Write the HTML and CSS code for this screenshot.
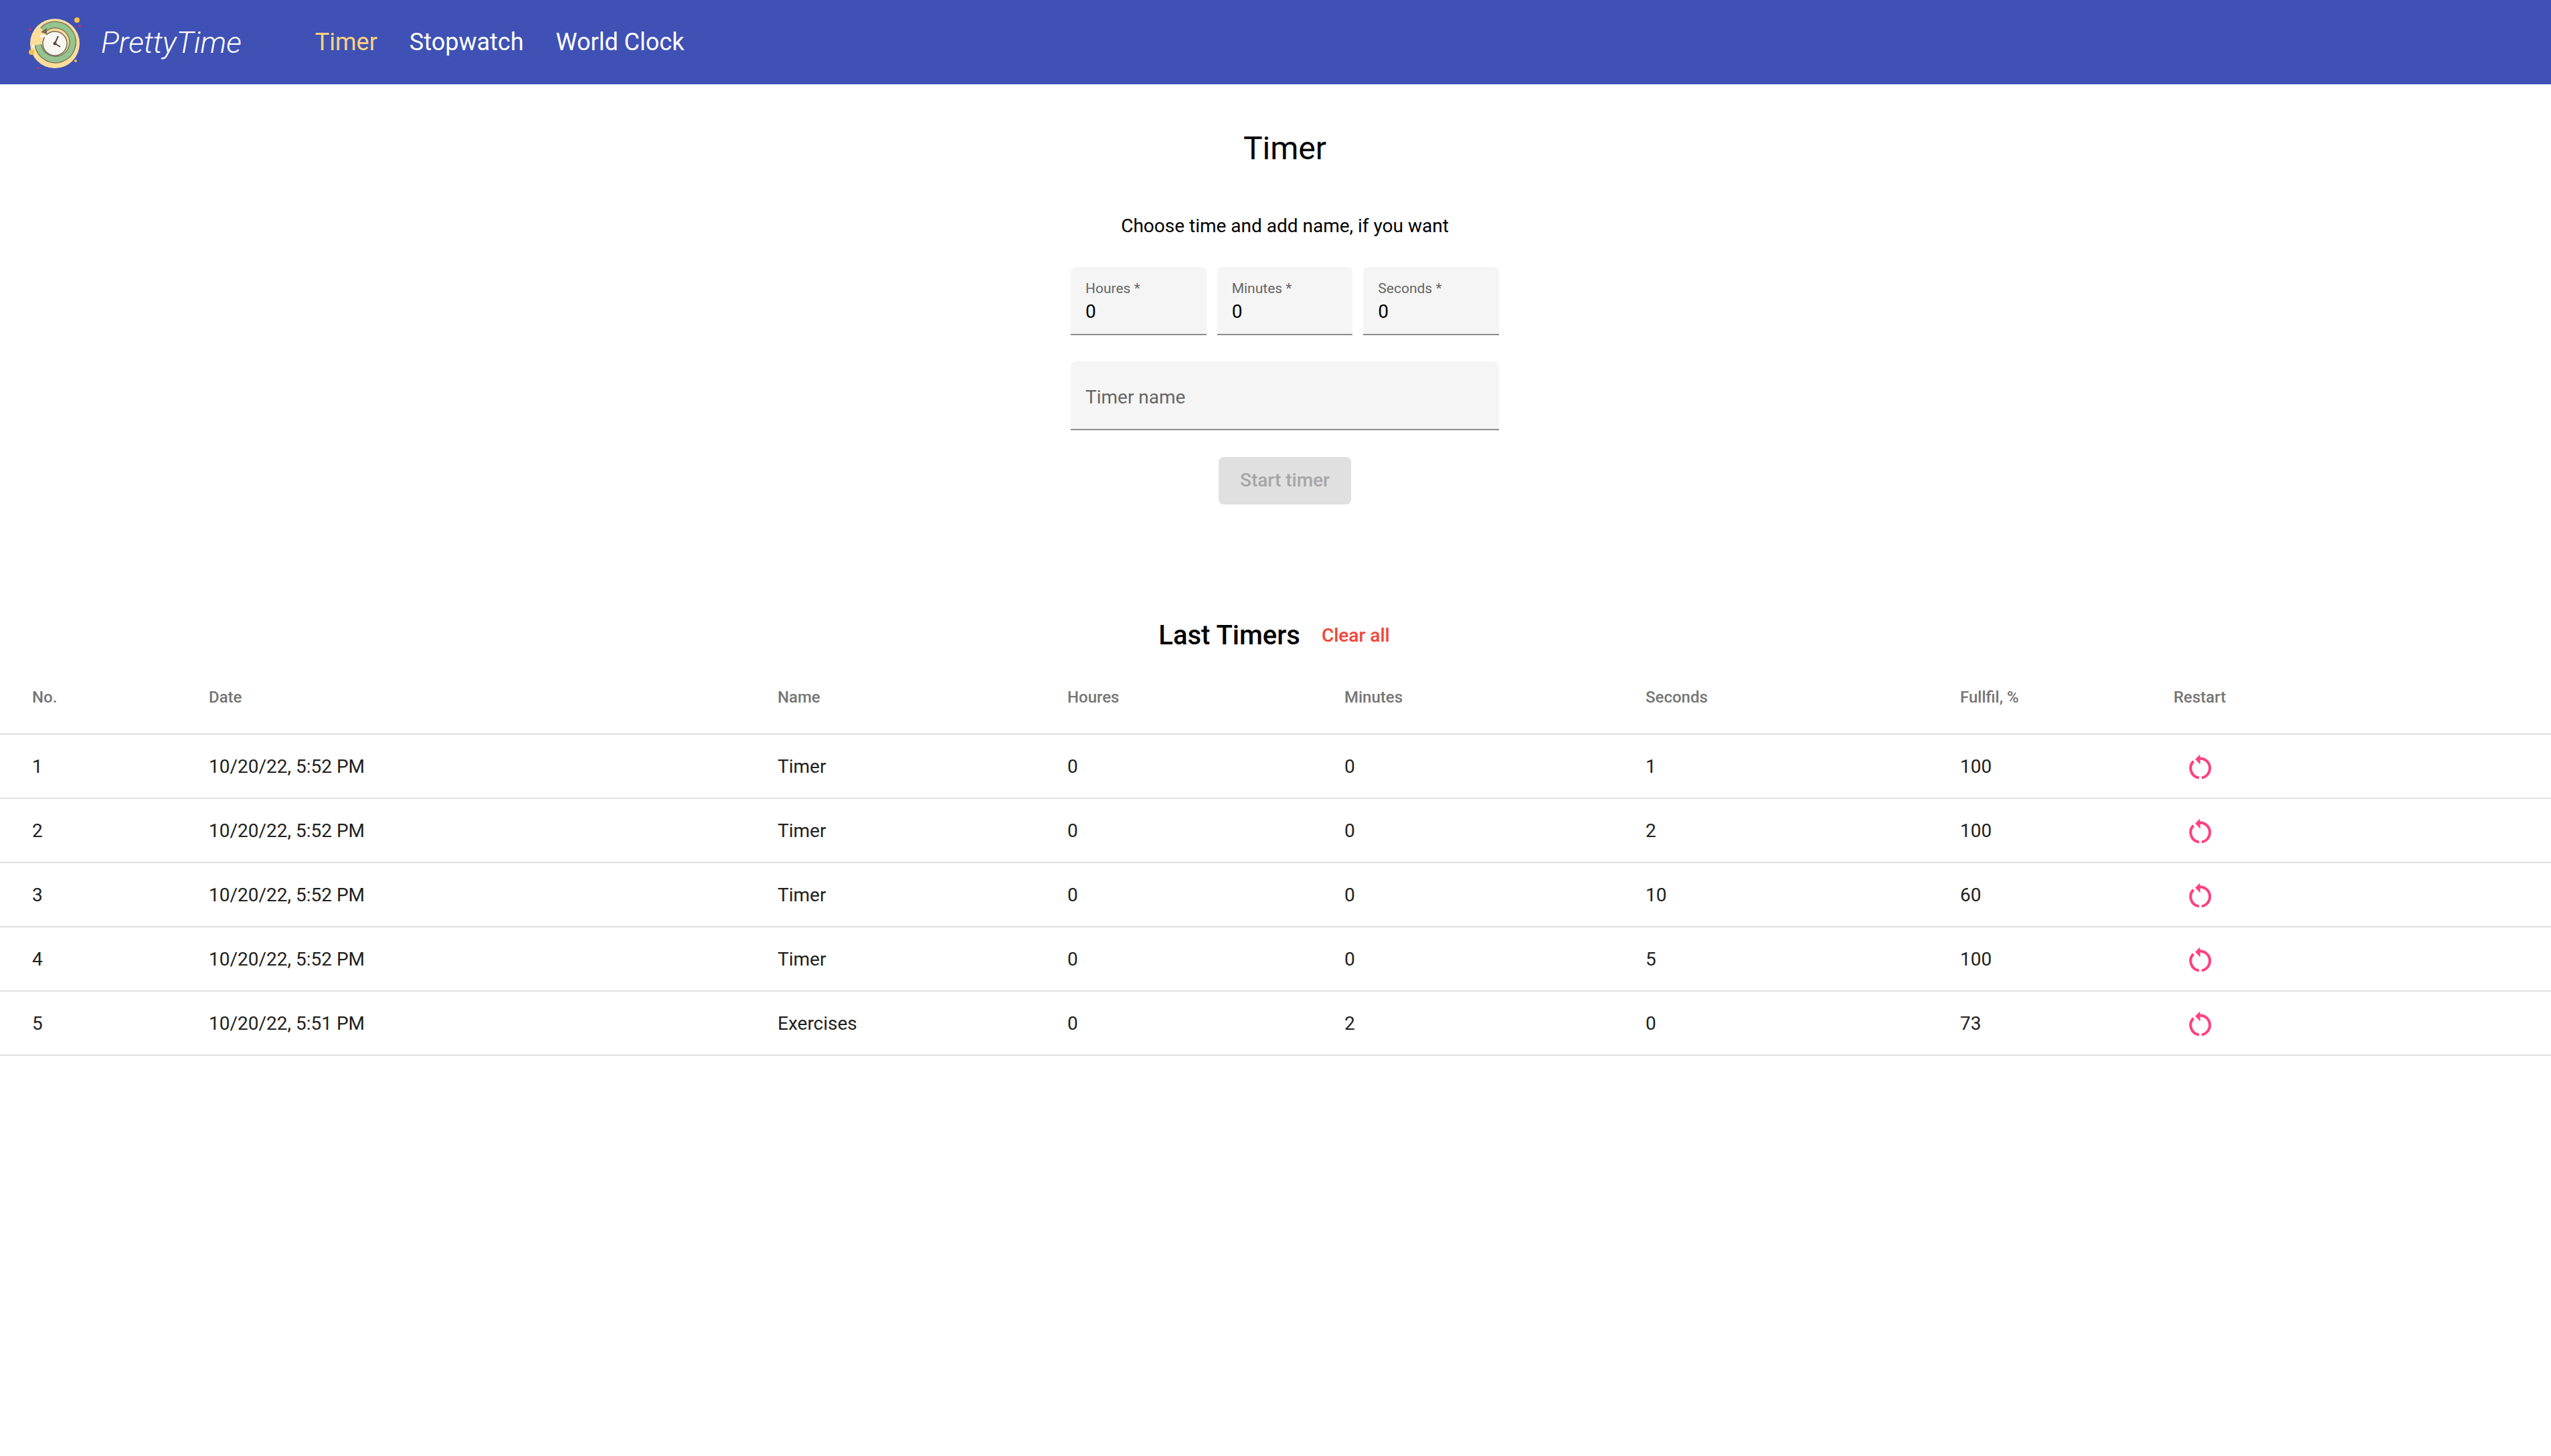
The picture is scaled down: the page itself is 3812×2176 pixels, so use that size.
FILE: index.html
```html
<!DOCTYPE html>
<html lang="en">
<head>
  <meta charset="UTF-8">
  <title>PrettyTime</title>
  <link rel="stylesheet" href="styles.css">
</head>
<body>
  <!-- top bar -->
  <header class="toolbar">
    <svg class="logo" viewBox="0 0 120 120" width="120" height="120" aria-hidden="true">
      <circle cx="62" cy="62" r="37" fill="#fedd9b"/>
      <path d="M44 42A26 26 0 1 1 37 64" fill="none" stroke="#7d7a5c" stroke-width="11"/>
      <path d="M44 42A26 26 0 1 1 37 64" fill="none" stroke="#95c48f" stroke-width="8"/>
      <circle cx="62" cy="62" r="18" fill="#f8f6f1" stroke="#6f6a5a" stroke-width="1.5"/>
      <path d="M62 62l5-11M62 62l8 5" stroke="#5a4a44" stroke-width="2" fill="none"/>
      <circle cx="62" cy="62" r="2.5" fill="#5a4a44"/>
      <path d="M41 45l9-6v9z" fill="#6f6a5a"/>
      <path d="M40 51h13" stroke="#fff" stroke-width="3"/>
      <circle cx="95" cy="27" r="4" fill="#f5c142"/>
      <circle cx="27" cy="75" r="4" fill="#f5c142"/>
      <circle cx="30" cy="66" r="2" fill="#fff"/>
      <circle cx="93" cy="88" r="2" fill="#f5c142"/>
      <circle cx="99" cy="36" r="2" fill="#c2325f"/>
      <circle cx="25" cy="41" r="2" fill="#c2325f"/>
      <circle cx="37" cy="99" r="2" fill="#c2325f"/>
    </svg>
    <span class="brand">PrettyTime</span>
    <nav class="nav">
      <a class="nav-link active" href="#">Timer</a>
      <a class="nav-link" href="#">Stopwatch</a>
      <a class="nav-link" href="#">World Clock</a>
    </nav>
  </header>

  <!-- timer form -->
  <section class="timer-panel">
    <h1 class="title">Timer</h1>
    <p class="subtitle">Choose time and add name, if you want</p>
    <div class="time-fields">
      <div class="field">
        <span class="field-label">Houres *</span>
        <span class="field-value">0</span>
      </div>
      <div class="field">
        <span class="field-label">Minutes *</span>
        <span class="field-value">0</span>
      </div>
      <div class="field">
        <span class="field-label">Seconds *</span>
        <span class="field-value">0</span>
      </div>
    </div>
    <div class="field field-name">
      <span class="field-placeholder">Timer name</span>
    </div>
    <button class="start-btn" disabled>Start timer</button>
  </section>

  <!-- history -->
  <section class="history">
    <div class="history-head">
      <h2 class="history-title">Last Timers</h2>
      <a class="clear-link" href="#">Clear all</a>
    </div>
    <table class="history-table">
      <colgroup>
        <col class="col-no"><col class="col-date"><col class="col-name"><col class="col-hours">
        <col class="col-minutes"><col class="col-seconds"><col class="col-fullfil"><col>
      </colgroup>
      <thead>
        <tr><th>No.</th><th>Date</th><th>Name</th><th>Houres</th><th>Minutes</th><th>Seconds</th><th>Fullfil, %</th><th>Restart</th></tr>
      </thead>
      <tbody>
        <tr>
          <td>1</td><td>10/20/22, 5:52 PM</td><td>Timer</td><td>0</td><td>0</td><td>1</td><td>100</td>
          <td><svg class="restart" viewBox="0 0 48 48" width="48" height="48"><use href="#restart-icon"/></svg></td>
        </tr>
        <tr>
          <td>2</td><td>10/20/22, 5:52 PM</td><td>Timer</td><td>0</td><td>0</td><td>2</td><td>100</td>
          <td><svg class="restart" viewBox="0 0 48 48" width="48" height="48"><use href="#restart-icon"/></svg></td>
        </tr>
        <tr>
          <td>3</td><td>10/20/22, 5:52 PM</td><td>Timer</td><td>0</td><td>0</td><td>10</td><td>60</td>
          <td><svg class="restart" viewBox="0 0 48 48" width="48" height="48"><use href="#restart-icon"/></svg></td>
        </tr>
        <tr>
          <td>4</td><td>10/20/22, 5:52 PM</td><td>Timer</td><td>0</td><td>0</td><td>5</td><td>100</td>
          <td><svg class="restart" viewBox="0 0 48 48" width="48" height="48"><use href="#restart-icon"/></svg></td>
        </tr>
        <tr>
          <td>5</td><td>10/20/22, 5:51 PM</td><td>Exercises</td><td>0</td><td>2</td><td>0</td><td>73</td>
          <td><svg class="restart" viewBox="0 0 48 48" width="48" height="48"><use href="#restart-icon"/></svg></td>
        </tr>
      </tbody>
    </table>
  </section>

  <svg class="icon-defs" width="0" height="0" aria-hidden="true">
    <defs>
      <g id="restart-icon">
        <path d="M23 9.6A14.5 14.5 0 0 1 26 38.4M22 38.4A14.5 14.5 0 0 1 13.8 13.7" fill="none" stroke="#ff4081" stroke-width="4"/>
        <path d="M16.3 10.7L23.3 3.4L24 18.4z" fill="#ff4081"/>
      </g>
    </defs>
  </svg>
</body>
</html>
```

FILE: styles.css
```css
html, body {
  margin: 0;
  padding: 0;
  background: #ffffff;
  color: #000000;
  font-family: Roboto, "Liberation Sans", sans-serif;
}

/* top bar */
.toolbar {
  display: flex;
  align-items: center;
  height: 126px;
  background: #3f51b5;
  color: #ffffff;
}
.logo {
  flex: none;
  margin-left: 20px;
}
.brand {
  margin-left: 11px;
  font-size: 45px;
  font-weight: 300;
  font-style: italic;
}
.nav {
  display: flex;
  gap: 48px;
  margin-left: 110px;
}
.nav-link {
  color: #ffffff;
  font-size: 36px;
  font-weight: 400;
  text-decoration: none;
}
.nav-link.active {
  color: #ffd180;
}

/* timer form */
.timer-panel {
  display: flex;
  flex-direction: column;
  align-items: center;
  padding-left: 28px;
}
.title {
  margin: 64px 0 0;
  font-size: 48px;
  font-weight: 400;
  line-height: 64px;
}
.subtitle {
  margin: 64px 0 0;
  font-size: 28px;
  font-weight: 400;
  line-height: 40px;
}
.time-fields {
  display: flex;
  gap: 16px;
  width: 640px;
  margin-top: 41px;
}
.field {
  box-sizing: border-box;
  display: flex;
  flex-direction: column;
  flex: 1;
  height: 102px;
  padding: 18px 22px 0;
  background: #f5f5f5;
  border-bottom: 2px solid #8c8c8c;
  border-radius: 8px 8px 0 0;
}
.field-label {
  font-size: 21px;
  line-height: 28px;
  color: #666666;
}
.field-value {
  margin-top: 3px;
  font-size: 28px;
  line-height: 36px;
}
.field-name {
  flex: none;
  justify-content: center;
  width: 640px;
  height: 103px;
  margin-top: 39px;
  padding-top: 5px;
}
.field-placeholder {
  font-size: 28px;
  color: #666666;
}
.start-btn {
  width: 198px;
  height: 71px;
  margin-top: 40px;
  padding: 0 0 3px;
  border: none;
  border-radius: 8px;
  background: #e0e0e0;
  color: #a6a6a6;
  font-family: inherit;
  font-size: 28px;
  font-weight: 500;
}

/* history */
.history-head {
  display: flex;
  align-items: center;
  justify-content: center;
  gap: 32px;
  height: 64px;
  margin-top: 163px;
  padding-right: 4px;
}
.history-title {
  margin: 0;
  font-size: 40px;
  font-weight: 500;
}
.clear-link {
  color: #f44336;
  font-size: 28px;
  font-weight: 500;
  text-decoration: none;
}
.history-table {
  width: 100%;
  margin-top: 4px;
  border-collapse: collapse;
  table-layout: fixed;
}
.col-no { width: 312px; }
.col-date { width: 850px; }
.col-name { width: 433px; }
.col-hours { width: 414px; }
.col-minutes { width: 450px; }
.col-seconds { width: 470px; }
.col-fullfil { width: 319px; }

.history-table th,
.history-table td {
  padding: 0;
  text-align: left;
  border-bottom: 2px solid #e0e0e0;
}
.history-table th:first-child,
.history-table td:first-child {
  padding-left: 48px;
}
.history-table th {
  height: 112px;
  padding-top: 3px;
  box-sizing: border-box;
  color: #757575;
  font-size: 24px;
  font-weight: 500;
}
.history-table td {
  height: 94px;
  color: #212121;
  font-size: 28px;
  font-weight: 400;
}
.restart {
  display: block;
  margin: 6px 0 0 16px;
}
.icon-defs {
  display: block;
  height: 0;
}
```
